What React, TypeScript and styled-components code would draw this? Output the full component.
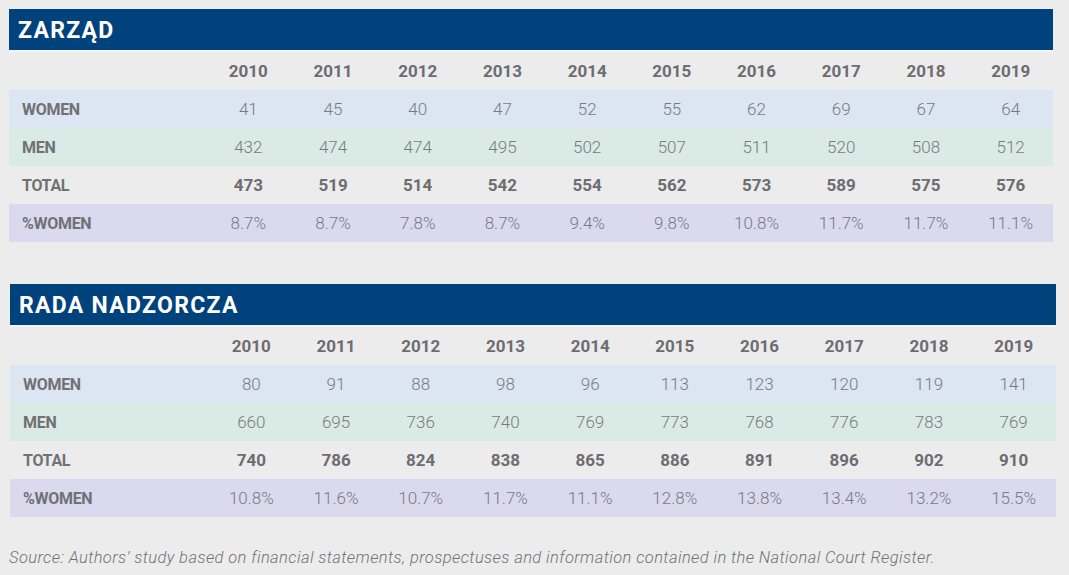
import React from "react";
import styled, { createGlobalStyle } from "styled-components";

const Global = createGlobalStyle`
  html, body { margin: 0; padding: 0; background: #ececec; }
  body { font-family: Roboto, "Liberation Sans", sans-serif; }
`;

const Page = styled.div`
  width: 1069px;
  height: 575px;
  background: #ececec;
  box-sizing: border-box;
  padding-top: 9px;
  display: flex;
  flex-direction: column;
`;

const Section = styled.section<{ $left: number; $width: number; $gap: number }>`
  margin-left: ${(p) => p.$left}px;
  width: ${(p) => p.$width}px;
  margin-bottom: ${(p) => p.$gap}px;
  display: flex;
  flex-direction: column;
`;

const TitleBar = styled.div`
  height: 43px;
  background: #00437c;
  background-clip: padding-box;
  color: #ffffff;
  font-family: Roboto, "Liberation Sans", sans-serif;
  font-weight: 700;
  font-size: 23px;
  letter-spacing: 1.3px;
  display: flex;
  align-items: center;
  padding-left: 9px;
  padding-top: 1px;
  box-sizing: border-box;
  border-bottom: 2px solid #f4f4f4;
`;

const Row = styled.div<{ $tone: "none" | "blue" | "green" | "violet"; $label: number }>`
  display: grid;
  grid-template-columns: ${(p) => p.$label}px repeat(10, 1fr);
  height: 38px;
  align-items: center;
  background: ${(p) =>
    p.$tone === "blue"
      ? "#dce5f2"
      : p.$tone === "green"
      ? "#d9ebe4"
      : p.$tone === "violet"
      ? "#dad9ee"
      : "transparent"};
`;

const Label = styled.div`
  padding-left: 13px;
  font-family: Roboto, "Liberation Sans", sans-serif;
  font-weight: 700;
  font-size: 16px;
  letter-spacing: -0.3px;
  color: #717175;
`;

const Cell = styled.div<{ $bold?: boolean }>`
  text-align: center;
  font-family: Roboto, "Liberation Sans", sans-serif;
  font-weight: ${(p) => (p.$bold ? 700 : 300)};
  font-size: 17px;
  color: ${(p) => (p.$bold ? "#6d6d71" : "#7a7a7e")};
`;

const Source = styled.p`
  margin: 31px 0 0 9px;
  font-family: Roboto, "Liberation Sans", sans-serif;
  font-style: italic;
  font-weight: 300;
  font-size: 16.5px;
  letter-spacing: 0.4px;
  line-height: 20px;
  color: #727276;
`;

const years = [2010, 2011, 2012, 2013, 2014, 2015, 2016, 2017, 2018, 2019];

type TableData = {
  title: string;
  women: string[];
  men: string[];
  total: string[];
  pct: string[];
};

const tables: TableData[] = [
  {
    title: "ZARZĄD",
    women: ["41", "45", "40", "47", "52", "55", "62", "69", "67", "64"],
    men: ["432", "474", "474", "495", "502", "507", "511", "520", "508", "512"],
    total: ["473", "519", "514", "542", "554", "562", "573", "589", "575", "576"],
    pct: ["8.7%", "8.7%", "7.8%", "8.7%", "9.4%", "9.8%", "10.8%", "11.7%", "11.7%", "11.1%"],
  },
  {
    title: "RADA NADZORCZA",
    women: ["80", "91", "88", "98", "96", "113", "123", "120", "119", "141"],
    men: ["660", "695", "736", "740", "769", "773", "768", "776", "783", "769"],
    total: ["740", "786", "824", "838", "865", "886", "891", "896", "902", "910"],
    pct: ["10.8%", "11.6%", "10.7%", "11.7%", "11.1%", "12.8%", "13.8%", "13.4%", "13.2%", "15.5%"],
  },
];

const layouts = [
  { left: 9, width: 1044, label: 197, gap: 42 },
  { left: 10, width: 1046, label: 199, gap: 0 },
];

function DataTable({ data, layout }: { data: TableData; layout: (typeof layouts)[number] }) {
  return (
    <Section $left={layout.left} $width={layout.width} $gap={layout.gap}>
      <TitleBar>{data.title}</TitleBar>
      <Row $tone="none" $label={layout.label}>
        <span />
        {years.map((y) => (
          <Cell key={y} $bold>
            {y}
          </Cell>
        ))}
      </Row>
      <Row $tone="blue" $label={layout.label}>
        <Label>WOMEN</Label>
        {data.women.map((v, i) => (
          <Cell key={i}>{v}</Cell>
        ))}
      </Row>
      <Row $tone="green" $label={layout.label}>
        <Label>MEN</Label>
        {data.men.map((v, i) => (
          <Cell key={i}>{v}</Cell>
        ))}
      </Row>
      <Row $tone="none" $label={layout.label}>
        <Label>TOTAL</Label>
        {data.total.map((v, i) => (
          <Cell key={i} $bold>
            {v}
          </Cell>
        ))}
      </Row>
      <Row $tone="violet" $label={layout.label}>
        <Label>%WOMEN</Label>
        {data.pct.map((v, i) => (
          <Cell key={i}>{v}</Cell>
        ))}
      </Row>
    </Section>
  );
}

export default function App() {
  return (
    <Page>
      <Global />
      {tables.map((t, i) => (
        <DataTable key={t.title} data={t} layout={layouts[i]} />
      ))}
      <Source>
        Source: Authors’ study based on financial statements, prospectuses and information contained in the
        National Court Register.
      </Source>
    </Page>
  );
}
